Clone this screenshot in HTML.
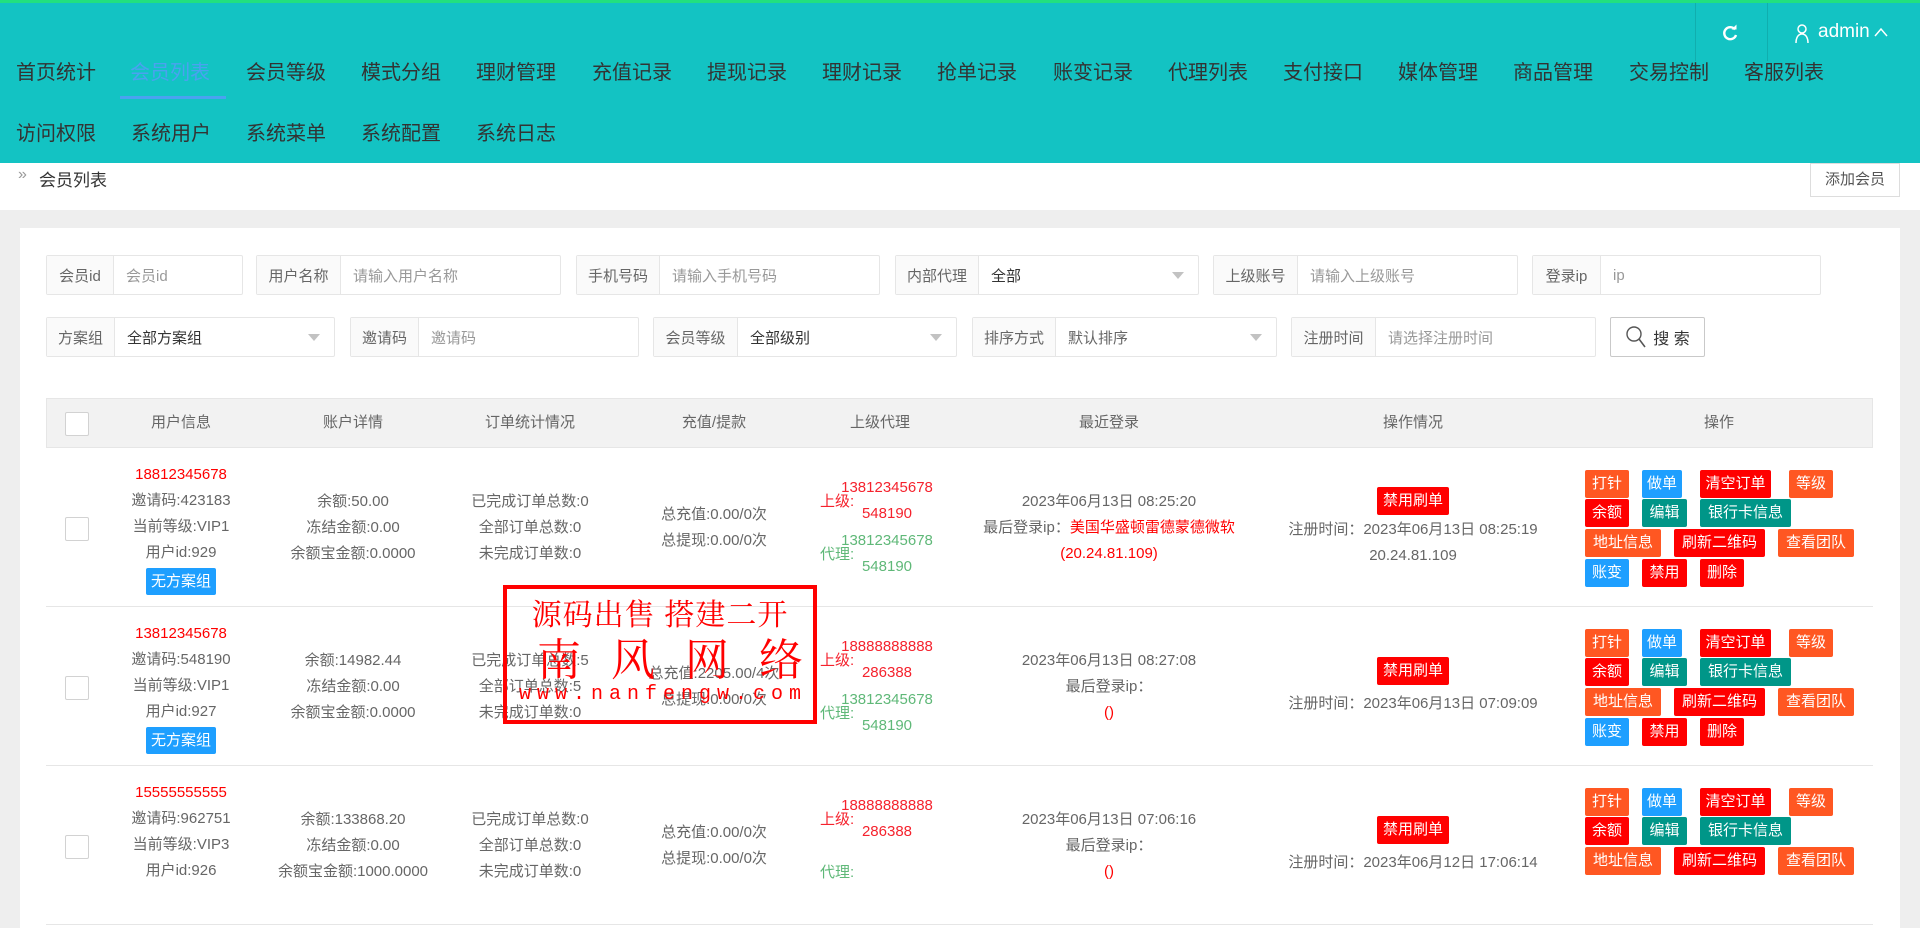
<!DOCTYPE html>
<html><head><meta charset="utf-8"><style>
*{margin:0;padding:0;box-sizing:border-box}
body{width:1920px;height:872px;overflow:hidden;background:#eeeeee;font-family:"Liberation Sans","Noto Sans CJK SC",sans-serif;color:#666;font-size:15px;position:relative}
.a{position:absolute}
#hdr{left:0;top:0;width:1920px;height:163px;background:#13c3c3;border-top:3px solid #22e07f}
.nav{position:absolute;font-size:20px;color:#333;white-space:nowrap;line-height:24px}
.crumb{left:0;top:163px;width:1920px;height:47px;background:#fff}
.card{left:20px;top:228px;width:1880px;height:700px;background:#fff}
.f{position:absolute;height:40px;border:1px solid #e6e6e6;background:#fff;display:flex;font-size:15px;border-radius:2px}
.f .l{background:#fafafa;border-right:1px solid #e6e6e6;color:#666;display:flex;align-items:center;justify-content:center;white-space:nowrap}
.f .v{padding-left:12px;display:flex;align-items:center;color:#999;flex:1;position:relative;white-space:nowrap}
.f .v.s{color:#333}
.tri{position:absolute;right:14px;top:16px;width:0;height:0;border-left:6px solid transparent;border-right:6px solid transparent;border-top:7px solid #c2c2c2}
.th{left:46px;top:398px;width:1827px;height:50px;background:#f2f2f2;border:1px solid #e6e6e6}
.hc{position:absolute;top:398px;height:50px;line-height:50px;text-align:center;color:#666;font-size:15px;white-space:nowrap}
.cb{position:absolute;width:24px;height:24px;border:1px solid #d2d2d2;background:#fff;border-radius:2px}
.row{position:absolute;left:46px;width:1827px;height:159px;border-bottom:1px solid #e6e6e6}
.c{position:absolute;top:0;height:159px;display:flex;flex-direction:column;justify-content:center;align-items:center;line-height:26px;white-space:nowrap;font-size:15px;color:#666}
.red{color:#f00}
.b{position:absolute;color:#fff;font-size:15px;line-height:28px;text-align:center;border-radius:2px;white-space:nowrap}
.or{background:#ff5722}.bl{background:#1e9fff}.rd{background:#ff0000}.tl{background:#009688}
.ag{position:absolute;font-size:15px;line-height:26px;white-space:nowrap}
</style></head><body>
<div id="hdr" class="a">
 <div class="nav" style="left:16px;top:58px">首页统计</div>
 <div class="nav" style="left:130px;top:58px;color:#4aa2f0">会员列表</div>
 <div class="a" style="left:120px;top:93px;width:106px;height:3px;background:#4aa2f0"></div>
 <div class="nav" style="left:246px;top:58px">会员等级</div>
 <div class="nav" style="left:361px;top:58px">模式分组</div>
 <div class="nav" style="left:476px;top:58px">理财管理</div>
 <div class="nav" style="left:592px;top:58px">充值记录</div>
 <div class="nav" style="left:707px;top:58px">提现记录</div>
 <div class="nav" style="left:822px;top:58px">理财记录</div>
 <div class="nav" style="left:937px;top:58px">抢单记录</div>
 <div class="nav" style="left:1053px;top:58px">账变记录</div>
 <div class="nav" style="left:1168px;top:58px">代理列表</div>
 <div class="nav" style="left:1283px;top:58px">支付接口</div>
 <div class="nav" style="left:1398px;top:58px">媒体管理</div>
 <div class="nav" style="left:1513px;top:58px">商品管理</div>
 <div class="nav" style="left:1629px;top:58px">交易控制</div>
 <div class="nav" style="left:1744px;top:58px">客服列表</div>
 <div class="nav" style="left:16px;top:119px">访问权限</div>
 <div class="nav" style="left:131px;top:119px">系统用户</div>
 <div class="nav" style="left:246px;top:119px">系统菜单</div>
 <div class="nav" style="left:361px;top:119px">系统配置</div>
 <div class="nav" style="left:476px;top:119px">系统日志</div>
 <div class="a" style="left:1695px;top:0;width:1px;height:58px;background:#10aeae"></div>
 <div class="a" style="left:1767px;top:0;width:1px;height:58px;background:#10aeae"></div>
 <svg class="a" style="left:1721px;top:21px" width="18" height="18" viewBox="0 0 18 18"><path d="M14 5.5A6 6 0 1 0 15 11" fill="none" stroke="#fff" stroke-width="2.4"/><path d="M10.5 5.5h5v-5z" fill="#fff"/></svg>
 <svg class="a" style="left:1795px;top:21px" width="14" height="20" viewBox="0 0 14 20"><circle cx="7" cy="5" r="4" fill="none" stroke="#fff" stroke-width="1.5"/><path d="M1 19c0-5 2-9 6-9s6 4 6 9" fill="none" stroke="#fff" stroke-width="1.5"/></svg>
 <div class="a" style="left:1818px;top:18px;font-size:19px;color:#fff">admin</div>
 <svg class="a" style="left:1874px;top:24px" width="14" height="10" viewBox="0 0 14 10"><path d="M1 9L7 2l6 7" fill="none" stroke="#fff" stroke-width="1.5"/></svg>
</div>
<div class="a crumb">
 <div class="a" style="left:18px;top:3px;color:#999;font-size:16px">»</div>
 <div class="a" style="left:39px;top:3px;color:#333;font-size:17px">会员列表</div>
 <div class="a" style="left:1810px;top:0;width:90px;height:34px;border:1px solid #ddd;background:#fff;line-height:32px;text-align:center;font-size:15px;color:#555">添加会员</div>
</div>
<div class="a card"></div>

<div class="f" style="left:46px;top:255px;width:197px"><div class="l" style="width:67px">会员id</div><div class="v">会员id</div></div>
<div class="f" style="left:256px;top:255px;width:305px"><div class="l" style="width:84px">用户名称</div><div class="v">请输入用户名称</div></div>
<div class="f" style="left:576px;top:255px;width:304px"><div class="l" style="width:83px">手机号码</div><div class="v">请输入手机号码</div></div>
<div class="f" style="left:895px;top:255px;width:304px"><div class="l" style="width:83px">内部代理</div><div class="v s">全部<span class="tri"></span></div></div>
<div class="f" style="left:1213px;top:255px;width:305px"><div class="l" style="width:84px">上级账号</div><div class="v">请输入上级账号</div></div>
<div class="f" style="left:1532px;top:255px;width:289px"><div class="l" style="width:68px">登录ip</div><div class="v">ip</div></div>

<div class="f" style="left:46px;top:317px;width:289px"><div class="l" style="width:68px">方案组</div><div class="v s">全部方案组<span class="tri"></span></div></div>
<div class="f" style="left:350px;top:317px;width:289px"><div class="l" style="width:68px">邀请码</div><div class="v">邀请码</div></div>
<div class="f" style="left:653px;top:317px;width:304px"><div class="l" style="width:84px">会员等级</div><div class="v s">全部级别<span class="tri"></span></div></div>
<div class="f" style="left:972px;top:317px;width:305px"><div class="l" style="width:83px">排序方式</div><div class="v" style="color:#666">默认排序<span class="tri"></span></div></div>
<div class="f" style="left:1291px;top:317px;width:305px"><div class="l" style="width:84px">注册时间</div><div class="v">请选择注册时间</div></div>
<div class="f" style="left:1610px;top:317px;width:95px;border-color:#c9c9c9;justify-content:center;align-items:center;color:#333;font-size:16px">
 <svg width="22" height="24" viewBox="0 0 22 24" style="margin-right:6px"><circle cx="9" cy="9" r="7" fill="none" stroke="#555" stroke-width="1.4"/><path d="M14 14l6 8" stroke="#555" stroke-width="1.6"/></svg>搜 索</div>

<div class="a th"></div>
<div class="cb" style="left:65px;top:412px"></div>
<div class="hc" style="left:131px;width:100px">用户信息</div>
<div class="hc" style="left:303px;width:100px">账户详情</div>
<div class="hc" style="left:470px;width:120px">订单统计情况</div>
<div class="hc" style="left:664px;width:100px">充值/提款</div>
<div class="hc" style="left:830px;width:100px">上级代理</div>
<div class="hc" style="left:1059px;width:100px">最近登录</div>
<div class="hc" style="left:1363px;width:100px">操作情况</div>
<div class="hc" style="left:1669px;width:100px">操作</div>

<!-- row 1 -->
<div class="row" style="top:448px">
 <div class="cb" style="left:19px;top:69px"></div>
 <div class="c" style="left:75px;width:120px;justify-content:flex-start;padding-top:14px"><span class="red">18812345678</span><span>邀请码:423183</span><span>当前等级:VIP1</span><span>用户id:929</span><span style="background:#1e9fff;color:#fff;padding:0 5px;line-height:27px;margin-top:2px;border-radius:2px">无方案组</span></div>
 <div class="c" style="left:227px;width:160px"><span>余额:50.00</span><span>冻结金额:0.00</span><span>余额宝金额:0.0000</span></div>
 <div class="c" style="left:414px;width:140px"><span>已完成订单总数:0</span><span>全部订单总数:0</span><span>未完成订单数:0</span></div>
 <div class="c" style="left:598px;width:140px"><span>总充值:0.00/0次</span><span>总提现:0.00/0次</span></div>
 <div class="ag" style="left:774px;top:41px;color:#f5222d">上级:</div>
 <div class="ag" style="left:790px;top:27px;width:102px;text-align:center;color:#f5222d">13812345678<br>548190</div>
 <div class="ag" style="left:774px;top:94px;color:#5fb878">代理:</div>
 <div class="ag" style="left:790px;top:80px;width:102px;text-align:center;color:#5fb878">13812345678<br>548190</div>
 <div class="c" style="left:920px;width:286px"><span>2023年06月13日 08:25:20</span><span>最后登录ip：<span class="red">美国华盛顿雷德蒙德微软</span></span><span class="red">(20.24.81.109)</span></div>
 <div class="c" style="left:1227px;width:280px"><span class="b rd" style="position:static;padding:0 6px;margin-bottom:2px">禁用刷单</span><span>注册时间：2023年06月13日 08:25:19</span><span>20.24.81.109</span></div>
 <div class="b or" style="left:1539px;top:22px;width:44px">打针</div><div class="b bl" style="left:1596px;top:22px;width:40px">做单</div><div class="b rd" style="left:1654px;top:22px;width:71px">清空订单</div><div class="b or" style="left:1743px;top:22px;width:44px">等级</div>
 <div class="b rd" style="left:1539px;top:51px;width:44px">余额</div><div class="b tl" style="left:1596px;top:51px;width:45px">编辑</div><div class="b tl" style="left:1654px;top:51px;width:91px">银行卡信息</div>
 <div class="b or" style="left:1539px;top:81px;width:76px">地址信息</div><div class="b rd" style="left:1628px;top:81px;width:91px">刷新二维码</div><div class="b or" style="left:1732px;top:81px;width:76px">查看团队</div>
 <div class="b bl" style="left:1539px;top:111px;width:44px">账变</div><div class="b rd" style="left:1596px;top:111px;width:45px">禁用</div><div class="b rd" style="left:1654px;top:111px;width:44px">删除</div>
</div>

<!-- row 2 -->
<div class="row" style="top:607px">
 <div class="cb" style="left:19px;top:69px"></div>
 <div class="c" style="left:75px;width:120px;justify-content:flex-start;padding-top:14px"><span class="red">13812345678</span><span>邀请码:548190</span><span>当前等级:VIP1</span><span>用户id:927</span><span style="background:#1e9fff;color:#fff;padding:0 5px;line-height:27px;margin-top:2px;border-radius:2px">无方案组</span></div>
 <div class="c" style="left:227px;width:160px"><span>余额:14982.44</span><span>冻结金额:0.00</span><span>余额宝金额:0.0000</span></div>
 <div class="c" style="left:414px;width:140px"><span>已完成订单总数:5</span><span>全部订单总数:5</span><span>未完成订单数:0</span></div>
 <div class="c" style="left:598px;width:140px"><span>总充值:2205.00/4次</span><span>总提现:0.00/0次</span></div>
 <div class="ag" style="left:774px;top:41px;color:#f5222d">上级:</div>
 <div class="ag" style="left:790px;top:27px;width:102px;text-align:center;color:#f5222d">18888888888<br>286388</div>
 <div class="ag" style="left:774px;top:94px;color:#5fb878">代理:</div>
 <div class="ag" style="left:790px;top:80px;width:102px;text-align:center;color:#5fb878">13812345678<br>548190</div>
 <div class="c" style="left:920px;width:286px"><span>2023年06月13日 08:27:08</span><span>最后登录ip：</span><span class="red">()</span></div>
 <div class="c" style="left:1227px;width:280px"><span class="b rd" style="position:static;padding:0 6px;margin-bottom:6px">禁用刷单</span><span>注册时间：2023年06月13日 07:09:09</span></div>
 <div class="b or" style="left:1539px;top:22px;width:44px">打针</div><div class="b bl" style="left:1596px;top:22px;width:40px">做单</div><div class="b rd" style="left:1654px;top:22px;width:71px">清空订单</div><div class="b or" style="left:1743px;top:22px;width:44px">等级</div>
 <div class="b rd" style="left:1539px;top:51px;width:44px">余额</div><div class="b tl" style="left:1596px;top:51px;width:45px">编辑</div><div class="b tl" style="left:1654px;top:51px;width:91px">银行卡信息</div>
 <div class="b or" style="left:1539px;top:81px;width:76px">地址信息</div><div class="b rd" style="left:1628px;top:81px;width:91px">刷新二维码</div><div class="b or" style="left:1732px;top:81px;width:76px">查看团队</div>
 <div class="b bl" style="left:1539px;top:111px;width:44px">账变</div><div class="b rd" style="left:1596px;top:111px;width:45px">禁用</div><div class="b rd" style="left:1654px;top:111px;width:44px">删除</div>
</div>

<!-- row 3 -->
<div class="row" style="top:766px">
 <div class="cb" style="left:19px;top:69px"></div>
 <div class="c" style="left:75px;width:120px;justify-content:flex-start;padding-top:14px"><span class="red">15555555555</span><span>邀请码:962751</span><span>当前等级:VIP3</span><span>用户id:926</span></div>
 <div class="c" style="left:227px;width:160px"><span>余额:133868.20</span><span>冻结金额:0.00</span><span>余额宝金额:1000.0000</span></div>
 <div class="c" style="left:414px;width:140px"><span>已完成订单总数:0</span><span>全部订单总数:0</span><span>未完成订单数:0</span></div>
 <div class="c" style="left:598px;width:140px"><span>总充值:0.00/0次</span><span>总提现:0.00/0次</span></div>
 <div class="ag" style="left:774px;top:41px;color:#f5222d">上级:</div>
 <div class="ag" style="left:790px;top:27px;width:102px;text-align:center;color:#f5222d">18888888888<br>286388</div>
 <div class="ag" style="left:774px;top:94px;color:#5fb878">代理:</div>
 <div class="c" style="left:920px;width:286px"><span>2023年06月13日 07:06:16</span><span>最后登录ip：</span><span class="red">()</span></div>
 <div class="c" style="left:1227px;width:280px"><span class="b rd" style="position:static;padding:0 6px;margin-bottom:6px">禁用刷单</span><span>注册时间：2023年06月12日 17:06:14</span></div>
 <div class="b or" style="left:1539px;top:22px;width:44px">打针</div><div class="b bl" style="left:1596px;top:22px;width:40px">做单</div><div class="b rd" style="left:1654px;top:22px;width:71px">清空订单</div><div class="b or" style="left:1743px;top:22px;width:44px">等级</div>
 <div class="b rd" style="left:1539px;top:51px;width:44px">余额</div><div class="b tl" style="left:1596px;top:51px;width:45px">编辑</div><div class="b tl" style="left:1654px;top:51px;width:91px">银行卡信息</div>
 <div class="b or" style="left:1539px;top:81px;width:76px">地址信息</div><div class="b rd" style="left:1628px;top:81px;width:91px">刷新二维码</div><div class="b or" style="left:1732px;top:81px;width:76px">查看团队</div>
</div>

<!-- watermark -->
<div class="a" style="left:503px;top:585px;width:314px;height:139px;border:4px solid #f00;font-family:'Noto Serif CJK SC',serif;color:#f00;text-align:center;overflow:hidden">
 <div style="font-size:30px;line-height:38px;margin-top:4px;letter-spacing:1px;white-space:nowrap">源码出售 搭建二开</div>
 <div style="font-size:44px;line-height:50px;letter-spacing:30px;margin-left:30px;white-space:nowrap">南风网络</div>
 <div style="font-family:'Liberation Mono',monospace;font-size:20px;line-height:28px;letter-spacing:6px;margin-left:6px;white-space:nowrap">www.nanfengw.com</div>
</div>
</body></html>
